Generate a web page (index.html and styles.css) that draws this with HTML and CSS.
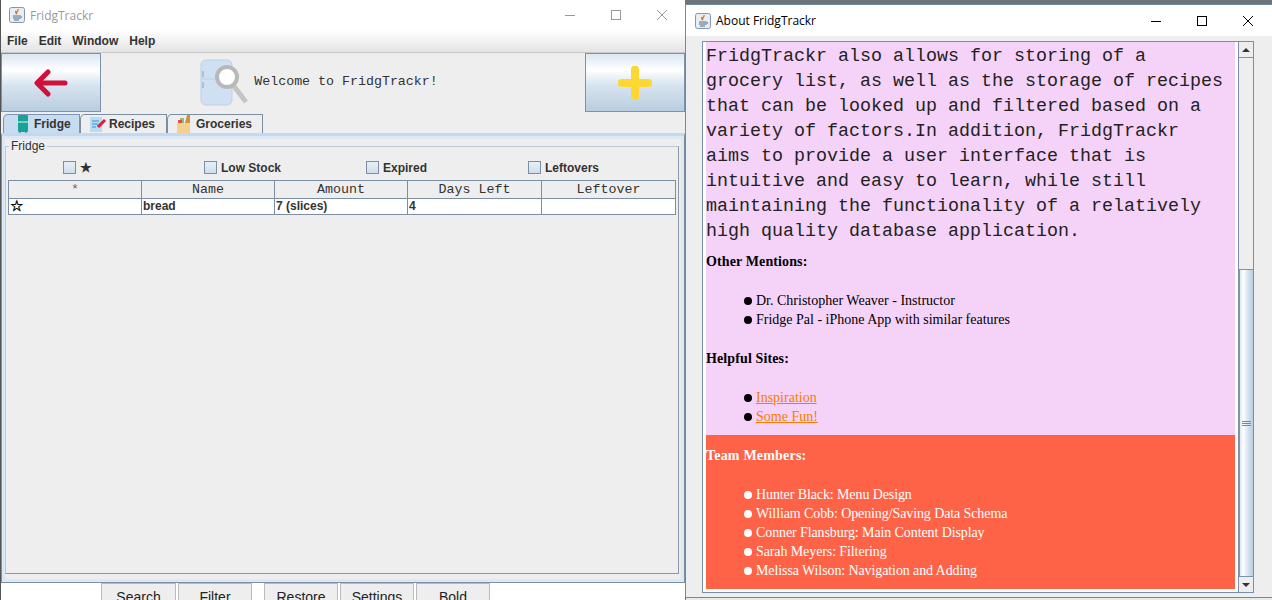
FILE: index.html
```html
<!DOCTYPE html>
<html lang="en">
<head>
<meta charset="utf-8">
<title>FridgTrackr</title>
<link rel="stylesheet" href="styles.css">
</head>
<body>
<div class="backdrop"></div>
<section class="window main-window">
  <header class="titlebar main-title">
    <svg class="java-icon" viewBox="0 0 16 16"><rect x=".5" y=".5" width="15" height="15" rx="2" fill="#e8edf3" stroke="#8496a8"/><path d="M9 2c1 2-3 3-1 5M7 4c-1 1 0 2 .5 3" fill="none" stroke="#d2691e" stroke-width="1.2"/><path d="M4 9h7M4 11h7M5 13h5M11 9c2 0 2 2 0 2" fill="none" stroke="#4a6d8c" stroke-width="1"/></svg>
    <span class="title-text faded">FridgTrackr</span>
    <div class="controls faded-controls">
      <svg viewBox="0 0 12 12"><path d="M1 6.5h10" stroke="#999" fill="none"/></svg>
      <svg viewBox="0 0 12 12"><rect x="1.500" y="1.500" width="9" height="9" stroke="#999" fill="none"/></svg>
      <svg viewBox="0 0 12 12"><path d="M1 1l10 10M11 1L1 11" stroke="#999" fill="none"/></svg>
    </div>
  </header>
  <nav class="menubar"><span>File</span><span>Edit</span><span>Window</span><span>Help</span></nav>
  <div class="toolbar">
    <button class="tool-btn">
      <svg width="36" height="28" viewBox="0 0 36 28"><path d="M32 14H5M15 3L4 14l11 11" fill="none" stroke="#d0103a" stroke-width="5" stroke-linecap="round" stroke-linejoin="round"/></svg>
    </button>
    <div class="welcome">
      <svg width="50" height="48" viewBox="0 0 50 48"><rect x="1" y="1" width="31" height="45" rx="5" fill="#cfe0f2" stroke="#bcd0e6"/><path d="M1 20h31" stroke="#bcd0e6"/><path d="M3 12v6M3 23v6" stroke="#9db7d0" stroke-width="1.500"/><path d="M33 26l13 17" stroke="#c4c4c4" stroke-width="5"/><circle cx="27" cy="18" r="10" fill="#fff" stroke="#b8b8b8" stroke-width="4"/></svg>
      <span>Welcome to FridgTrackr!</span>
    </div>
    <button class="tool-btn">
      <svg width="34" height="34" viewBox="0 0 34 34"><path d="M17 3.500v27M3.500 17h27" fill="none" stroke="#fdd835" stroke-width="8" stroke-linecap="round"/></svg>
    </button>
  </div>
  <div class="tabs">
    <div class="tab tab-active">
      <svg width="10" height="19" viewBox="0 0 10 19"><rect x="0" y="0" width="10" height="17" rx="1" fill="#17a398"/><path d="M0 7h10" stroke="#e6f5f3"/><path d="M2 17v2M8 17v2" stroke="#555"/></svg>
      Fridge
    </div>
    <div class="tab tab-recipes">
      <svg width="17" height="17" viewBox="0 0 17 17"><rect x="0" y="1" width="12" height="15" fill="#b5dcf7"/><path d="M2 5h7M2 8h6M2 11h4" stroke="#3f8fd0"/><path d="M8 11l7-7" stroke="#e0183c" stroke-width="3"/></svg>
      Recipes
    </div>
    <div class="tab tab-groceries">
      <svg width="14" height="19" viewBox="0 0 14 19"><path d="M0 8h13v11H0z" fill="#f6d08e"/><path d="M3 8V3h4v5z" fill="#8fbf7f"/><path d="M8 8l2-8h3v8z" fill="#d0903c"/><path d="M1 5h4v3H1z" fill="#e05040"/></svg>
      Groceries
    </div>
  </div>
  <div class="tab-panel">
    <fieldset class="group">
      <legend>Fridge</legend>
      <div class="filters">
        <label class="check"><i></i><span class="star-label">★</span></label>
        <label class="check"><i></i>Low Stock</label>
        <label class="check"><i></i>Expired</label>
        <label class="check"><i></i>Leftovers</label>
      </div>
      <div class="table">
        <div class="cell head star-head">*</div>
        <div class="cell head">Name</div>
        <div class="cell head">Amount</div>
        <div class="cell head">Days Left</div>
        <div class="cell head">Leftover</div>
        <div class="cell data star-cell">☆</div>
        <div class="cell data">bread</div>
        <div class="cell data">7 (slices)</div>
        <div class="cell data">4</div>
        <div class="cell data"></div>
      </div>
    </fieldset>
  </div>
  <div class="bottom-bar">
    <button class="small-btn">Search</button>
    <button class="small-btn gap-after">Filter</button>
    <button class="small-btn">Restore</button>
    <button class="small-btn">Settings</button>
    <button class="small-btn">Bold</button>
  </div>
</section>

<section class="window about-window">
  <header class="titlebar about-title">
    <svg class="java-icon" viewBox="0 0 16 16"><rect x=".5" y=".5" width="15" height="15" rx="2" fill="#e8edf3" stroke="#8496a8"/><path d="M9 2c1 2-3 3-1 5M7 4c-1 1 0 2 .5 3" fill="none" stroke="#d2691e" stroke-width="1.2"/><path d="M4 9h7M4 11h7M5 13h5M11 9c2 0 2 2 0 2" fill="none" stroke="#4a6d8c" stroke-width="1"/></svg>
    <span class="title-text">About FridgTrackr</span>
    <div class="controls">
      <svg viewBox="0 0 12 12"><path d="M1 6.500h10" stroke="#000" fill="none"/></svg>
      <svg viewBox="0 0 12 12"><rect x="1.500" y="1.500" width="9" height="9" stroke="#000" fill="none"/></svg>
      <svg viewBox="0 0 12 12"><path d="M1 1l10 10M11 1L1 11" stroke="#000" fill="none"/></svg>
    </div>
  </header>
  <div class="about-body">
    <div class="doc-frame">
      <article class="doc">
        <div class="doc-pink">
          <p class="lead">FridgTrackr also allows for storing of a grocery list, as well as the storage of recipes that can be looked up and filtered based on a variety of factors.In addition, FridgTrackr aims to provide a user interface that is intuitive and easy to learn, while still maintaining the functionality of a relatively high quality database application.</p>
          <h4>Other Mentions:</h4>
          <ul>
            <li>Dr. Christopher Weaver - Instructor</li>
            <li>Fridge Pal - iPhone App with similar features</li>
          </ul>
          <h4>Helpful Sites:</h4>
          <ul>
            <li><a href="#">Inspiration</a></li>
            <li><a href="#">Some Fun!</a></li>
          </ul>
        </div>
        <div class="doc-red">
          <h4>Team Members:</h4>
          <ul>
            <li>Hunter Black: Menu Design</li>
            <li>William Cobb: Opening/Saving Data Schema</li>
            <li>Conner Flansburg: Main Content Display</li>
            <li>Sarah Meyers: Filtering</li>
            <li>Melissa Wilson: Navigation and Adding</li>
          </ul>
        </div>
      </article>
      <div class="scrollbar">
        <div class="arrow arrow-up"><b></b></div>
        <div class="track"></div>
        <div class="thumb"><span class="grip"></span></div>
        <div class="arrow arrow-down"><b></b></div>
      </div>
    </div>
  </div>
</section>
</body>
</html>
```
FILE: styles.css
```css
* { box-sizing: border-box; }
html, body { margin: 0; height: 100%; }
body {
  position: relative;
  width: 1272px;
  height: 600px;
  overflow: hidden;
  background: #6f7478;
  font-family: "Liberation Sans", Arial, sans-serif;
}
.backdrop { position: absolute; left: 686px; right: 0; top: 560px; bottom: 0; background: #e9e9e9; }
.window { position: absolute; overflow: hidden; }
.main-window {
  left: 0; top: 0; width: 685px; height: 600px;
  background: #fff;
  border-left: 1px solid #555;
  display: flex; flex-direction: column;
}
.about-window {
  left: 685px; top: 4px; width: 587px; height: 594px;
  background: #eee;
  border: 1px solid #6b8aa3;
  border-right: none;
  display: flex; flex-direction: column;
}
.titlebar { display: flex; align-items: center; flex: none; background: #fff; }
.main-title { height: 30px; padding-left: 8px; }
.about-title { height: 31px; padding-left: 9px; }
.java-icon { width: 16px; height: 16px; flex: none; margin-right: 5px; }
.title-text { font: 12px "Segoe UI", "Open Sans", "Noto Sans", sans-serif; color: #000; }
.title-text.faded { color: #999; }
.controls { margin-left: auto; display: flex; gap: 34px; padding-right: 18px; align-items: center; }
.controls svg { width: 12px; height: 12px; display: block; }
.faded-controls { padding-right: 17px; }
.menubar {
  flex: none; height: 23px;
  display: flex; gap: 11px; padding: 0 0 0 6px;
  background: linear-gradient(#fff, #e4e4e4);
  border-bottom: 1px solid #c8c8c8;
  font-size: 12px; font-weight: bold; color: #333;
  align-items: center;
}
.toolbar {
  flex: none; height: 59px;
  display: flex; justify-content: space-between; align-items: flex-start;
  background: #eee;
}
.tool-btn {
  width: 100px; height: 59px; padding: 0;
  display: flex; align-items: center; justify-content: center;
  border: 1px solid #7a93ab;
  background: linear-gradient(#dbe7f2 0%, #fff 28%, #d7e4f0 55%, #b9cde0 100%);
}
.welcome {
  display: flex; align-items: center; gap: 4px; height: 59px; padding-right: 48px;
  font: 13.3px "Liberation Mono", monospace; color: #333;
}
.welcome span { margin-bottom: 3px; }
.tabs {
  flex: none; height: 21px;
  display: flex; align-items: flex-end;
  background: #eee;
  padding-left: 2px;
}
.tab {
  height: 19px;
  display: flex; align-items: center; gap: 5px; flex: none;
  font-size: 12px; font-weight: bold; color: #333;
  border: 1px solid #7a8fa3; border-bottom: none;
  background: #eee;
  border-top-left-radius: 5px;
}
.tab svg { flex: none; }
.tab-active { width: 77px; background: #c8dcf0; border-color: #7a93b8; padding-left: 14px; gap: 6px; }
.tab-recipes { width: 87px; padding-left: 9px; gap: 2px; }
.tab-groceries { width: 96px; padding-left: 9px; }
.tab-panel {
  flex: none; height: 450px;
  background: #eee;
  border: 1px solid #7a8fa3;
  border-top: 3px solid #c4d9ef;
  box-shadow: inset 0 0 0 3px #dce8f3;
  padding: 3px 5px 8px 3px;
}
.group {
  margin: 0; height: 100%;
  border: 1px solid #b8c9da;
  border-bottom-color: #8c98a4;
  border-right-color: #8c98a4;
  padding: 0 2px;
  min-width: 0;
}
.group legend {
  padding: 0 2px; margin-left: 1px;
  font-size: 12px; color: #333; font-weight: normal;
}
.filters {
  display: grid;
  grid-template-columns: 141px 162px 162px 160px;
  padding: 6px 0 4px 55px;
  height: 27px;
  align-items: center;
}
.check {
  display: flex; align-items: center; gap: 4px;
  font-size: 12px; font-weight: bold; color: #333;
}
.check i {
  width: 13px; height: 13px; flex: none;
  border: 1px solid #7a8fa3;
  background: linear-gradient(#e8eff6, #cfdeec);
}
.star-label { font-size: 13px; line-height: 13px; }
.table {
  display: grid;
  grid-template-columns: 133px 133px 133px 134px 133px;
  width: 668px;
  border: 1px solid #7a8fa3;
}
.cell {
  height: 15px; line-height: 15px;
  font-size: 12px; font-weight: bold; color: #333;
  border-right: 1px solid #7a8fa3;
  white-space: nowrap;
}
.cell:nth-child(5n) { border-right: none; }
.head {
  height: 18px; padding-top: 1px;
  background: #eee;
  border-bottom: 1px solid #7a8fa3;
  font: 13.3px/16px "Liberation Mono", monospace;
  text-align: center;
}
.star-head { color: #667; }
.data { background: #fff; padding-left: 1px; }
.star-cell { font-size: 15px; font-family: "DejaVu Sans", sans-serif; font-weight: bold; color: #111; line-height: 15px; -webkit-text-stroke: .5px #111; }
.bottom-bar {
  flex: 1; min-height: 0;
  background: #fff;
  display: flex;
  padding-left: 100px;
  gap: 2px;
}
.small-btn {
  width: 75px; height: 24px; flex: none;
  background: #eee;
  border: 1px solid #bbb;
  font: 14px "Liberation Sans", sans-serif; color: #222;
  padding: 4px 0 0;
  display: block;
  text-align: center;
  align-self: flex-start;
}
.small-btn + .small-btn { width: 74px; }
.gap-after { margin-right: 10px; }
.about-body { flex: 1; min-height: 0; padding: 5px 0 0 16px; background: #eee; overflow: hidden; }
.doc-frame {
  width: 552px; height: 552px;
  display: flex;
  border: 1px solid #7a8fa3;
  background: #fff;
}
.doc { width: 535px; flex: none; background: #fff; padding: 0 3px 3px; height: 100%; overflow: hidden; }
.doc-pink { background: #f5d3f9; padding-top: 2px; height: 393px; overflow: hidden; font: 14px "Liberation Serif", serif; color: #000; }
.doc-red { background: #ff6347; height: 154px; overflow: hidden; font: 14px "Liberation Serif", serif; color: #fff; }
.lead {
  margin: 0;
  width: 524px;
  font: 18.33px/25px "Liberation Mono", monospace;
  color: #222;
}
.doc h4 { margin: 10px 0 21px; font-size: 14px; line-height: 16px; font-weight: bold; letter-spacing: .12px; }
.doc ul + h4 { margin-top: 22px; }
.doc-red h4 { margin-top: 13px; letter-spacing: .2px; }
.doc ul { margin: 0; padding: 0 0 0 50px; list-style: none; }
.doc li { position: relative; height: 19px; line-height: 19px; }
.doc-red li { letter-spacing: -.1px; }
.doc li::before {
  content: ""; position: absolute; left: -12px; top: 6px;
  width: 8px; height: 8px; border-radius: 50%; background: #000;
}
.doc-red li::before { background: #fff; }
.doc a { color: #f57c00; text-decoration: underline; }
.scrollbar {
  position: relative;
  flex: 1; min-width: 0;
  background: #eee;
  border-left: 1px solid #7a8fa3;
  display: flex; flex-direction: column;
}
.arrow { height: 16px; flex: none; background: #eee; display: flex; align-items: center; justify-content: center; position: relative; z-index: 1; }
.arrow-up { border-bottom: 1px solid #7a93b8; }
.arrow-down { border-top: 1px solid #7a93b8; }
.arrow b { width: 0; height: 0; border-left: 4px solid transparent; border-right: 4px solid transparent; }
.arrow-up b { border-bottom: 4px solid #333; }
.arrow-down b { border-top: 4px solid #333; }
.track { flex: 1; }
.thumb {
  position: absolute; left: 0; right: 0; top: 227px; bottom: 16px;
  border-top: 1px solid #7a93b8; border-left: 1px solid #7a93c8;
  background: linear-gradient(90deg, #dce8f3, #fff 25%, #d7e4f0 60%, #b9cde0);
  display: flex; align-items: center; justify-content: center;
}
.grip { display: block; width: 9px; height: 5px; border-top: 1px solid #6a88b8; border-bottom: 1px solid #6a88b8; position: relative; }
.grip::after { content: ""; position: absolute; left: 0; right: 0; top: 1px; height: 1px; background: #6a88b8; }
```
